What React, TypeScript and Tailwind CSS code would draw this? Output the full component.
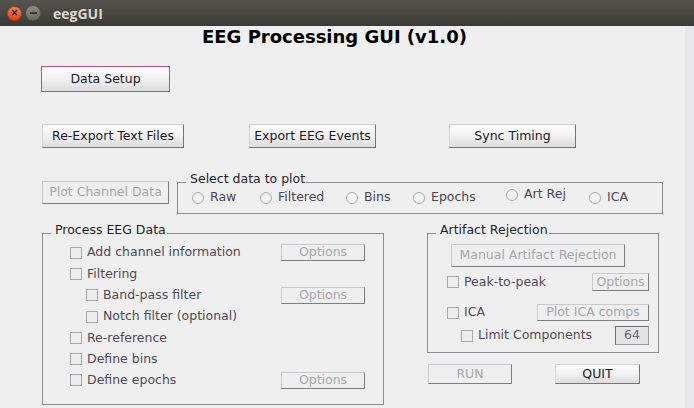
import React from 'react';

const font = "font-['DejaVu_Sans',sans-serif]";

type BtnProps = {
  label: string;
  w: string;
  h: string;
  disabled?: boolean;
  focus?: boolean;
  extra?: string;
};

function Btn({ label, w, h, disabled, focus, extra = '' }: BtnProps) {
  if (disabled) {
    return (
      <div
        className={`${w} ${h} ${extra} flex items-center justify-center border border-t-[#cacace] border-l-[#cacace] border-r-[#7e7e80] border-b-[#7e7e80] bg-[#efefef] text-[12.5px] text-[#a7a6ac] leading-none`}
      >
        {label}
      </div>
    );
  }
  return (
    <div
      className={`${w} ${h} ${extra} flex items-center justify-center border bg-gradient-to-b from-[#fdfdfd] via-[#f1f1f1] to-[#dcdcdc] text-[12.5px] text-[#20182a] leading-none ${
        focus
          ? 'border-[#b5527f]'
          : 'border-t-[#d2d3dc] border-l-[#d2d3dc] border-r-[#767678] border-b-[#767678]'
      }`}
    >
      {label}
    </div>
  );
}

function Check({ label }: { label: string }) {
  return (
    <div className="flex items-center gap-[5px]">
      <div className="w-[12px] h-[12px] border border-[#a9a8ae] bg-[#ededef]" />
      <span className="text-[12.5px] text-[#514a58] leading-none">{label}</span>
    </div>
  );
}

function Radio({ label, w, lift }: { label: string; w: string; lift?: boolean }) {
  return (
    <div className={`${w} flex items-center gap-[6px] ${lift ? 'mb-[6px]' : ''}`}>
      <div className="w-[12px] h-[12px] rounded-full border border-[#ababae] bg-[#f3f3f3]" />
      <span className="text-[12.5px] text-[#4d4555] leading-none">{label}</span>
    </div>
  );
}

function Group({ title, className, children }: { title: string; className: string; children: React.ReactNode }) {
  return (
    <div className={`relative border border-[#8c8c8e] ${className}`}>
      <span className="absolute left-[8px] top-[-12px] bg-[#efefef] pl-[4px] pr-[1px] text-[12.5px] leading-[15px] text-[#261d30]">
        {title}
      </span>
      {children}
    </div>
  );
}

export default function App() {
  const rows = [
    { label: 'Add channel information', indent: false, options: true },
    { label: 'Filtering', indent: false, options: false },
    { label: 'Band-pass filter', indent: true, options: true },
    { label: 'Notch filter (optional)', indent: true, options: false },
    { label: 'Re-reference', indent: false, options: false },
    { label: 'Define bins', indent: false, options: false },
    { label: 'Define epochs', indent: false, options: true },
  ];

  return (
    <div className={`w-[694px] h-[408px] flex flex-col overflow-hidden ${font}`}>
      {/* title bar */}
      <div className="h-[26px] flex items-center bg-gradient-to-b from-[#56544e] to-[#3b3a36]">
        <div className="ml-[7px] w-[15px] h-[15px] rounded-full bg-gradient-to-b from-[#f5804f] to-[#df4519] border border-[#b83a14] flex items-center justify-center text-[#3a2418] text-[10px] font-bold leading-none">
          ×
        </div>
        <div className="ml-[3px] w-[16px] h-[16px] rounded-full bg-gradient-to-b from-[#8c8b86] to-[#6a6964] border border-[#55544f] flex items-center justify-center">
          <div className="w-[7px] h-[2px] bg-[#3a3935]" />
        </div>
        <span className="ml-[12px] font-['Open_Sans',sans-serif] font-bold text-[14px] text-[#dcd8cf]">eegGUI</span>
      </div>

      <div className="flex flex-1">
        {/* main panel */}
        <div className="w-[685px] bg-[#efefef] flex flex-col">
          <div className="pl-[202px] h-[21px] text-[18px] leading-[21px] font-bold text-black">
            EEG Processing GUI (v1.0)
          </div>

          <div className="mt-[19px] pl-[41px]">
            <Btn label="Data Setup" w="w-[129px]" h="h-[26px]" focus />
          </div>

          <div className="mt-[32px] pl-[42px] flex">
            <Btn label="Re-Export Text Files" w="w-[142px]" h="h-[24px]" />
            <Btn label="Export EEG Events" w="w-[127px]" h="h-[24px]" extra="ml-[65px]" />
            <Btn label="Sync Timing" w="w-[127px]" h="h-[24px]" extra="ml-[73px]" />
          </div>

          <div className="mt-[33px] pl-[42px] flex items-start">
            <Btn label="Plot Channel Data" w="w-[127px]" h="h-[23px]" disabled />
            <Group title="Select data to plot" className="ml-[8px] mt-[1px] w-[486px] h-[32px] flex items-center pl-[14px] pb-[1px]">
              <Radio label="Raw" w="w-[68px]" />
              <Radio label="Filtered" w="w-[86px]" />
              <Radio label="Bins" w="w-[67px]" />
              <Radio label="Epochs" w="w-[93px]" />
              <Radio label="Art Rej" w="w-[83px]" lift />
              <Radio label="ICA" w="w-[60px]" />
            </Group>
          </div>

          <div className="mt-[19px] pl-[42px] flex items-start">
            <Group title="Process EEG Data" className="w-[342px] h-[172px] pt-[8px] flex flex-col">
              {rows.map((r) => (
                <div key={r.label} className="h-[21.3px] flex items-center">
                  <div className={`w-[238px] ${r.indent ? 'pl-[43px]' : 'pl-[27px]'}`}>
                    <Check label={r.label} />
                  </div>
                  {r.options && <Btn label="Options" w="w-[84px]" h="h-[17px]" disabled />}
                </div>
              ))}
            </Group>

            <div className="ml-[43px] flex flex-col">
              <Group title="Artifact Rejection" className="w-[232px] h-[120px] flex flex-col pr-[9px]">
                <Btn label="Manual Artifact Rejection" w="w-[174px]" h="h-[23px]" extra="mt-[10px] ml-[23px]" disabled />
                <div className="mt-[6px] pl-[19px] flex items-center justify-between">
                  <Check label="Peak-to-peak" />
                  <Btn label="Options" w="w-[57px]" h="h-[18px]" disabled />
                </div>
                <div className="mt-[13px] pl-[19px] flex items-center justify-between">
                  <Check label="ICA" />
                  <Btn label="Plot ICA comps" w="w-[112px]" h="h-[17px]" disabled />
                </div>
                <div className="mt-[5px] pl-[33px] flex items-center justify-between">
                  <Check label="Limit Components" />
                  <div className="w-[34px] h-[19px] border border-t-[#6f6f72] border-l-[#6f6f72] border-r-[#9a9a9e] border-b-[#9a9a9e] bg-[#e5e3e9] flex items-center justify-center text-[12.5px] leading-none text-[#6d6872]">
                    64
                  </div>
                </div>
              </Group>
              <div className="mt-[11px] pl-[1px] flex">
                <Btn label="RUN" w="w-[84px]" h="h-[20px]" disabled />
                <Btn label="QUIT" w="w-[85px]" h="h-[20px]" extra="ml-[43px]" />
              </div>
            </div>
          </div>
        </div>
        {/* right strip */}
        <div className="flex-1 bg-[#e8e7ec]" />
      </div>
    </div>
  );
}
